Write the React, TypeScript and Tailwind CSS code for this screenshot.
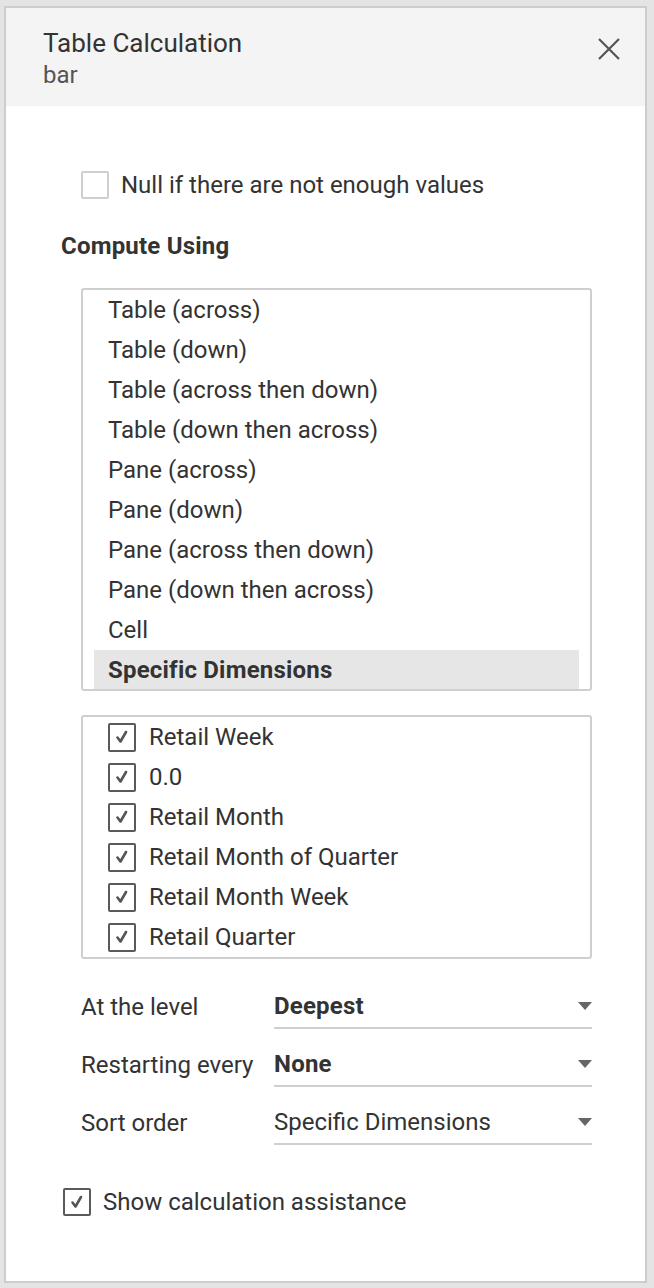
const computeOptions = [
  'Table (across)',
  'Table (down)',
  'Table (across then down)',
  'Table (down then across)',
  'Pane (across)',
  'Pane (down)',
  'Pane (across then down)',
  'Pane (down then across)',
  'Cell',
  'Specific Dimensions',
];

const dimensions = [
  'Retail Week',
  '0.0',
  'Retail Month',
  'Retail Month of Quarter',
  'Retail Month Week',
  'Retail Quarter',
];

const fields = [
  { label: 'At the level', value: 'Deepest', bold: true },
  { label: 'Restarting every', value: 'None', bold: true },
  { label: 'Sort order', value: 'Specific Dimensions', bold: false },
];

function CheckBox({ checked, small }: { checked: boolean; small?: boolean }) {
  return (
    <div
      className={
        'flex items-center justify-center rounded-[2px] bg-white shrink-0 ' +
        (small ? 'w-[28px] h-[29px] ' : 'w-[28px] h-[28px] ') +
        (checked ? 'border-2 border-[#5a5a5a]' : 'border-2 border-[#cfcfcf]')
      }
    >
      {checked && (
        <svg width="16" height="16" viewBox="0 0 16 16" fill="none">
          <path d="M3.5 8.5 L6.5 12.5 L12 3" stroke="#555" strokeWidth="2.6" strokeLinecap="round" strokeLinejoin="round" />
        </svg>
      )}
    </div>
  );
}

function Caret() {
  return (
    <svg width="14" height="8" viewBox="0 0 14 8">
      <path d="M0 0 L14 0 L7 8 Z" fill="#666" />
    </svg>
  );
}

export default function App() {
  return (
    <div
      className="w-[654px] h-[1288px] bg-[#e4e4e4] pl-[4px] pt-[6px] overflow-hidden text-[#333]"
      style={{ fontFamily: 'Roboto, "Liberation Sans", sans-serif' }}
    >
      <div className="w-[643px] h-[1277px] bg-white border-2 border-[#cdcdcd] flex flex-col">
        {/* header */}
        <div className="h-[98px] bg-[#f4f4f4] flex justify-between pl-[37px] pr-[24px] pt-[18px]">
          <div>
            <div className="text-[26px] leading-[34px] text-[#333]">Table Calculation</div>
            <div className="text-[24px] leading-[30px] text-[#555]">bar</div>
          </div>
          <svg width="24" height="24" viewBox="0 0 24 24" className="mt-[11px]">
            <path d="M2 2 L22 22 M22 2 L2 22" stroke="#555" strokeWidth="2.2" />
          </svg>
        </div>

        {/* body */}
        <div className="flex flex-col pl-[55px] pr-[53px]">
          <div className="flex items-center gap-[12px] ml-[20px] mt-[65px]">
            <CheckBox checked={false} />
            <span className="text-[24px] leading-[28px] text-[#333]">Null if there are not enough values</span>
          </div>

          <div className="text-[24px] font-bold leading-[28px] tracking-[0.2px] text-[#333] mt-[33px]">Compute Using</div>

          <div className="ml-[20px] mt-[28px] h-[403px] border-2 border-[#cfcfcf] rounded-[3px] overflow-hidden">
            {computeOptions.map((o, i) => {
              const last = i === computeOptions.length - 1;
              return (
                <div
                  key={o}
                  className={
                    'h-[40px] flex items-center mx-[11px] pl-[14px] text-[24px] ' +
                    (last ? 'bg-[#e6e6e6] font-bold tracking-[0.2px]' : '')
                  }
                >
                  {o}
                </div>
              );
            })}
          </div>

          <div className="ml-[20px] mt-[24px] h-[244px] border-2 border-[#cfcfcf] rounded-[3px] overflow-hidden">
            {dimensions.map((d) => (
              <div key={d} className="h-[40px] flex items-center gap-[13px] pl-[25px] text-[24px]">
                <CheckBox checked small />
                <span>{d}</span>
              </div>
            ))}
          </div>

          <div className="ml-[20px] mt-[26px] flex flex-col gap-[14px]">
            {fields.map((f) => (
              <div key={f.label} className="flex items-end">
                <div className="w-[193px] text-[24px] leading-[44px]">{f.label}</div>
                <div className="flex-1 h-[44px] border-b-2 border-[#cfcfcf] flex items-center justify-between">
                  <span className={'text-[24px] ' + (f.bold ? 'font-bold tracking-[0.2px]' : '')}>{f.value}</span>
                  <Caret />
                </div>
              </div>
            ))}
          </div>

          <div className="flex items-center gap-[12px] mt-[43px] ml-[2px]">
            <CheckBox checked />
            <span className="text-[24px] leading-[28px]">Show calculation assistance</span>
          </div>
        </div>
      </div>
    </div>
  );
}
